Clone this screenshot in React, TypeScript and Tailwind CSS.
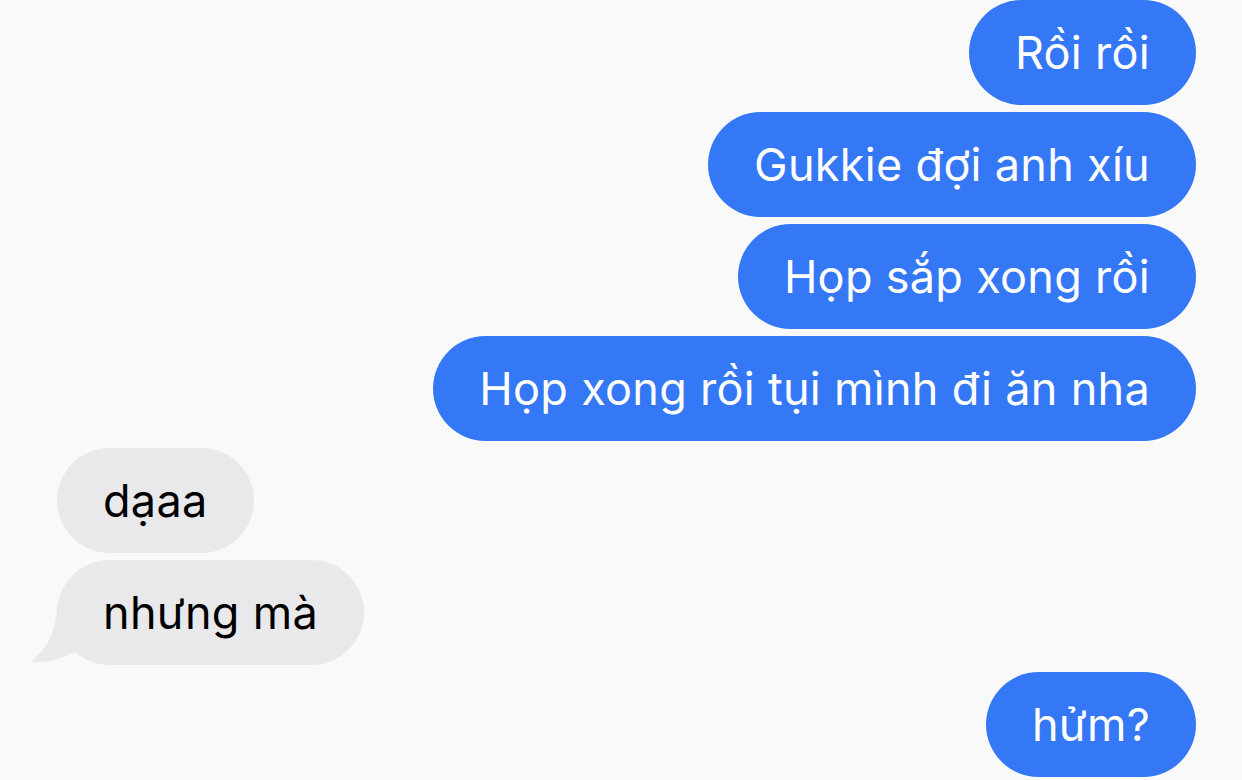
import React from "react";

type Msg = { text: string; me: boolean; tail?: boolean };

const messages: Msg[] = [
  { text: "Rồi rồi", me: true },
  { text: "Gukkie đợi anh xíu", me: true },
  { text: "Họp sắp xong rồi", me: true },
  { text: "Họp xong rồi tụi mình đi ăn nha", me: true },
  { text: "dạaa", me: false },
  { text: "nhưng mà", me: false, tail: true },
  { text: "hửm?", me: true },
];

function Tail() {
  return (
    <svg
      className="absolute left-[-28px] bottom-0"
      width="60"
      height="60"
      viewBox="0 0 60 60"
    >
      <path
        d="M28 0 C28 25 18 45 1 57 C14 58 28 56 42 48 L60 48 L60 0 Z"
        fill="#E9E9EB"
      />
    </svg>
  );
}

export default function App() {
  return (
    <div
      className="w-[1242px] h-[780px] overflow-hidden bg-[#F9F9F9] flex flex-col gap-[7px] pl-[57px] pr-[46px]"
      style={{ fontFamily: "Inter, 'Noto Sans', sans-serif" }}
    >
      {messages.map((m, i) => (
        <div key={i} className={`flex ${m.me ? "justify-end" : "justify-start"}`}>
          <div
            className={`relative h-[105px] flex items-center px-[46px] rounded-full text-[45px] tracking-[0.3px] ${
              m.me ? "bg-[#3478F6] text-white" : "bg-[#E9E9EB] text-black"
            }`}
          >
            {m.tail && <Tail />}
            <span className="relative">{m.text}</span>
          </div>
        </div>
      ))}
    </div>
  );
}
